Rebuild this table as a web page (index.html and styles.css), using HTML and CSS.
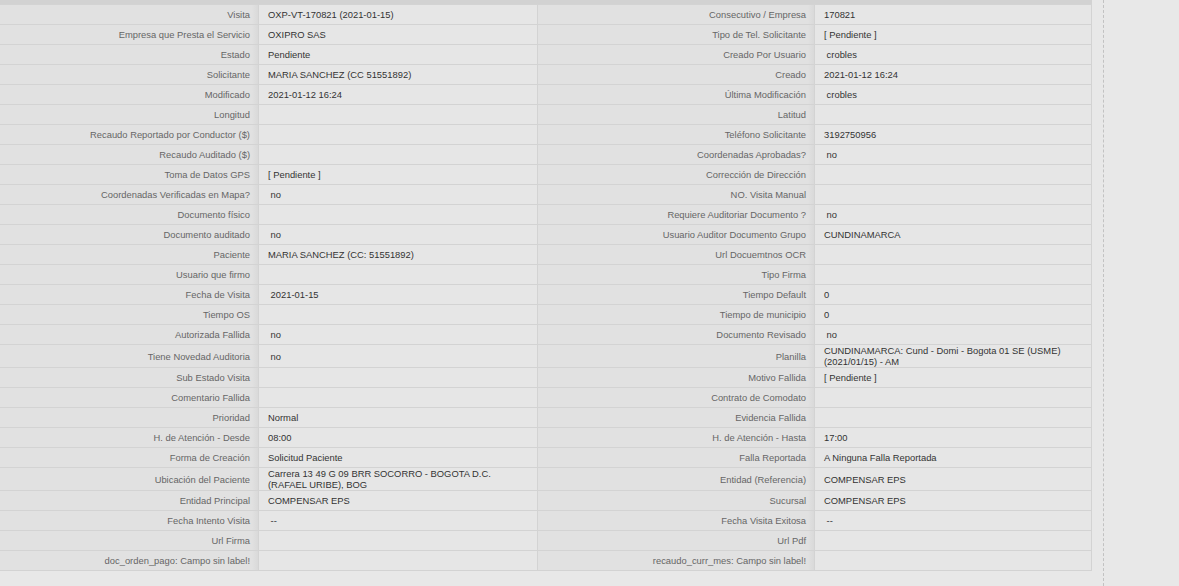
FILE: index.html
```html
<!DOCTYPE html>
<html lang="es">
<head>
    <meta charset="UTF-8">
    <title>Detalle de Visita</title>
    <link rel="stylesheet" href="styles.css">
</head>
<body>
<div id="contenido">
    <div id="detalle">
        <table id="tabla-visita">
            <colgroup>
                <col class="col-label1">
                <col class="col-valor1">
                <col class="col-label2">
                <col class="col-valor2">
            </colgroup>
            <tr>
                <td class="label">Visita</td><td class="valor">OXP-VT-170821 (2021-01-15)</td>
                <td class="label">Consecutivo / Empresa</td><td class="valor">170821</td>
            </tr>
            <tr>
                <td class="label">Empresa que Presta el Servicio</td><td class="valor">OXIPRO SAS</td>
                <td class="label">Tipo de Tel. Solicitante</td><td class="valor">[ Pendiente ]</td>
            </tr>
            <tr>
                <td class="label">Estado</td><td class="valor">Pendiente</td>
                <td class="label">Creado Por Usuario</td><td class="valor">&nbsp;crobles</td>
            </tr>
            <tr>
                <td class="label">Solicitante</td><td class="valor">MARIA SANCHEZ (CC 51551892)</td>
                <td class="label">Creado</td><td class="valor">2021-01-12 16:24</td>
            </tr>
            <tr>
                <td class="label">Modificado</td><td class="valor">2021-01-12 16:24</td>
                <td class="label">Última Modificación</td><td class="valor">&nbsp;crobles</td>
            </tr>
            <tr>
                <td class="label">Longitud</td><td class="valor"></td>
                <td class="label">Latitud</td><td class="valor"></td>
            </tr>
            <tr>
                <td class="label">Recaudo Reportado por Conductor ($)</td><td class="valor"></td>
                <td class="label">Teléfono Solicitante</td><td class="valor">3192750956</td>
            </tr>
            <tr>
                <td class="label">Recaudo Auditado ($)</td><td class="valor"></td>
                <td class="label">Coordenadas Aprobadas?</td><td class="valor">&nbsp;no</td>
            </tr>
            <tr>
                <td class="label">Toma de Datos GPS</td><td class="valor">[ Pendiente ]</td>
                <td class="label">Corrección de Dirección</td><td class="valor"></td>
            </tr>
            <tr>
                <td class="label">Coordenadas Verificadas en Mapa?</td><td class="valor">&nbsp;no</td>
                <td class="label">NO. Visita Manual</td><td class="valor"></td>
            </tr>
            <tr>
                <td class="label">Documento físico</td><td class="valor"></td>
                <td class="label">Requiere Auditoriar Documento ?</td><td class="valor">&nbsp;no</td>
            </tr>
            <tr>
                <td class="label">Documento auditado</td><td class="valor">&nbsp;no</td>
                <td class="label">Usuario Auditor Documento Grupo</td><td class="valor">CUNDINAMARCA</td>
            </tr>
            <tr>
                <td class="label">Paciente</td><td class="valor">MARIA SANCHEZ (CC: 51551892)</td>
                <td class="label">Url Docuemtnos OCR</td><td class="valor"></td>
            </tr>
            <tr>
                <td class="label">Usuario que firmo</td><td class="valor"></td>
                <td class="label">Tipo Firma</td><td class="valor"></td>
            </tr>
            <tr>
                <td class="label">Fecha de Visita</td><td class="valor">&nbsp;2021-01-15</td>
                <td class="label">Tiempo Default</td><td class="valor">0</td>
            </tr>
            <tr>
                <td class="label">Tiempo OS</td><td class="valor"></td>
                <td class="label">Tiempo de municipio</td><td class="valor">0</td>
            </tr>
            <tr>
                <td class="label">Autorizada Fallida</td><td class="valor">&nbsp;no</td>
                <td class="label">Documento Revisado</td><td class="valor">&nbsp;no</td>
            </tr>
            <tr>
                <td class="label">Tiene Novedad Auditoria</td><td class="valor">&nbsp;no</td>
                <td class="label">Planilla</td><td class="valor">CUNDINAMARCA: Cund - Domi - Bogota 01 SE (USME)<br>(2021/01/15) - AM</td>
            </tr>
            <tr>
                <td class="label">Sub Estado Visita</td><td class="valor"></td>
                <td class="label">Motivo Fallida</td><td class="valor">[ Pendiente ]</td>
            </tr>
            <tr>
                <td class="label">Comentario Fallida</td><td class="valor"></td>
                <td class="label">Contrato de Comodato</td><td class="valor"></td>
            </tr>
            <tr>
                <td class="label">Prioridad</td><td class="valor">Normal</td>
                <td class="label">Evidencia Fallida</td><td class="valor"></td>
            </tr>
            <tr>
                <td class="label">H. de Atención - Desde</td><td class="valor">08:00</td>
                <td class="label">H. de Atención - Hasta</td><td class="valor">17:00</td>
            </tr>
            <tr>
                <td class="label">Forma de Creación</td><td class="valor">Solicitud Paciente</td>
                <td class="label">Falla Reportada</td><td class="valor">A Ninguna Falla Reportada</td>
            </tr>
            <tr>
                <td class="label">Ubicación del Paciente</td><td class="valor">Carrera 13 49 G 09 BRR SOCORRO - BOGOTA D.C.<br>(RAFAEL URIBE), BOG</td>
                <td class="label">Entidad (Referencia)</td><td class="valor">COMPENSAR EPS</td>
            </tr>
            <tr>
                <td class="label">Entidad Principal</td><td class="valor">COMPENSAR EPS</td>
                <td class="label">Sucursal</td><td class="valor">COMPENSAR EPS</td>
            </tr>
            <tr>
                <td class="label">Fecha Intento Visita</td><td class="valor">&nbsp;--</td>
                <td class="label">Fecha Visita Exitosa</td><td class="valor">&nbsp;--</td>
            </tr>
            <tr>
                <td class="label">Url Firma</td><td class="valor"></td>
                <td class="label">Url Pdf</td><td class="valor"></td>
            </tr>
            <tr>
                <td class="label">doc_orden_pago: Campo sin label!</td><td class="valor"></td>
                <td class="label">recaudo_curr_mes: Campo sin label!</td><td class="valor"></td>
            </tr>
        </table>
    </div>

    <div id="separador"></div>
</div>
</body>
</html>
```

FILE: styles.css
```css
* {
    box-sizing: border-box;
}

html, body {
    margin: 0;
    padding: 0;
    background-color: #e8e8e8;
}

body {
    font-family: "Liberation Sans", Arial, Helvetica, sans-serif;
    font-size: 9.4px;
}

#contenido {
    display: flex;
    min-height: 100vh;
}

#detalle {
    width: 1092px;
    flex-shrink: 0;
    border-top: 4px solid #d2d2d2;
    align-self: flex-start;
}

#separador {
    margin-left: 11px;
    border-left: 1px dashed #c2c2c2;
}

#tabla-visita {
    width: 1092px;
    table-layout: fixed;
    border-collapse: separate;
    border-spacing: 0 1px;
    background-color: #d3d3d3;
}

.col-label1 { width: 259px; }
.col-valor1 { width: 279px; }
.col-label2 { width: 277px; }
.col-valor2 { width: 277px; }

#tabla-visita td {
    height: 19px;
    line-height: 11px;
    vertical-align: middle;
    white-space: nowrap;
}

#tabla-visita td.label {
    text-align: right;
    color: #666;
    padding: 0 8px 0 0;
    border-right: 1px solid #d3d3d3;
    background: linear-gradient(to right, #e1e1e1 0, #e1e1e1 calc(100% - 6px), #d9d9d9 100%);
}

#tabla-visita td.valor {
    color: #333;
    padding: 0 0 0 9px;
    border-right: 1px solid #d3d3d3;
    background-color: #e6e6e6;
}
```
